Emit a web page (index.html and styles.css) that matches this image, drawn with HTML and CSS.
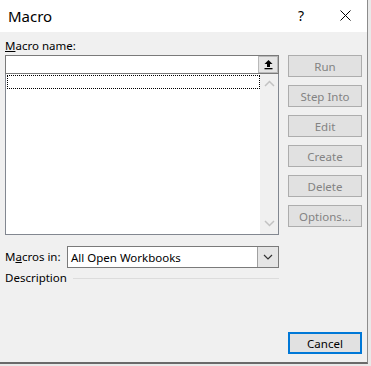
FILE: index.html
```html
<!DOCTYPE html>
<html lang="en">
<head>
<meta charset="UTF-8">
<title>Macro</title>
<link rel="stylesheet" href="styles.css">
</head>
<body>

  <div class="dialog">
    <div class="titlebar">
      <span class="title">Macro</span>
      <span class="help">?</span>
      <span class="close">
        <svg width="11" height="11" viewBox="0 0 11 11"><path d="M0.5 0.5 L10.5 10.5 M10.5 0.5 L0.5 10.5" stroke="#000" stroke-width="1" fill="none"/></svg>
      </span>
    </div>

    <div class="content">
      <div class="left">
        <div class="label"><u>M</u>acro name:</div>
        <div class="name-input">
          <span class="upload-btn">
            <svg width="11" height="11" viewBox="0 0 11 11"><path d="M5.5 1 L1.5 5 H4 V8 H7 V5 H9.5 Z" fill="#000"/><rect x="1.5" y="9" width="8" height="1.3" fill="#000"/></svg>
          </span>
        </div>
        <div class="listbox">
          <div class="list-items">
            <div class="focus-row"></div>
          </div>
          <div class="scrollbar">
            <svg width="11" height="7" viewBox="0 0 11 7"><path d="M1 6 L5.5 1.5 L10 6" stroke="#c2c2c2" stroke-width="1.5" fill="none"/></svg>
            <svg width="11" height="7" viewBox="0 0 11 7"><path d="M1 1 L5.5 5.5 L10 1" stroke="#c2c2c2" stroke-width="1.5" fill="none"/></svg>
          </div>
        </div>

        <div class="macros-in">
          <span class="label">M<u>a</u>cros in:</span>
          <div class="select">
            <span class="select-text">All Open Workbooks</span>
            <span class="drop-btn">
              <svg width="10" height="6" viewBox="0 0 10 6"><path d="M1 1 L5 5 L9 1" stroke="#333" stroke-width="1.2" fill="none"/></svg>
            </span>
          </div>
        </div>

        <div class="description">
          <span>Description</span>
          <span class="rule"></span>
        </div>
      </div>

      <div class="buttons">
        <button class="btn" disabled>Run</button>
        <button class="btn" disabled>Step Into</button>
        <button class="btn" disabled>Edit</button>
        <button class="btn" disabled>Create</button>
        <button class="btn" disabled>Delete</button>
        <button class="btn" disabled>Options...</button>
        <button class="btn cancel">Cancel</button>
      </div>
    </div>
  </div>

</body>
</html>
```

FILE: styles.css
```css
:root {
  --panel: #f0f0f0;
  --btn-bg: #e1e1e1;
  --btn-border: #adadad;
  --field-border: #7a7a7a;
  --disabled: #838383;
  --accent: #0078d7;
}
html, body {
  margin: 0;
  padding: 0;
}
body {
  width: 371px;
  height: 366px;
  overflow: hidden;
  background: #e9e9e9;
  font-family: 'Noto Sans', sans-serif;
  font-size: 11.5px;
  color: #000;
}
.dialog {
  width: 367px;
  height: 362px;
  border-right: 1px solid #8c8c8c;
  border-bottom: 2px solid #6a6a6a;
  background: var(--panel);
  display: flex;
  flex-direction: column;
}
.titlebar {
  height: 32px;
  background: #fff;
  display: flex;
  align-items: center;
  flex-shrink: 0;
}
.title {
  font-size: 15px;
  margin-left: 8px;
  flex: 1;
  padding-bottom: 1px;
}
.help {
  font-size: 14px;
  width: 10px;
  margin-right: 32px;
  padding-bottom: 2px;
}
.close {
  display: flex;
  margin-right: 16px;
  padding-bottom: 1px;
}
.content {
  flex: 1;
  display: flex;
  gap: 9px;
  padding: 6px 0 0 5px;
}
.left {
  width: 274px;
  display: flex;
  flex-direction: column;
}
.label {
  line-height: 16px;
  height: 16px;
  margin-bottom: 1px;
}
.name-input {
  height: 17px;
  border: 1px solid var(--field-border);
  background: #fff;
  display: flex;
  justify-content: flex-end;
}
.upload-btn {
  width: 20px;
  height: 17px;
  box-sizing: border-box;
  background: #e5e5e5;
  border: 1px solid #b9b9b9;
  display: flex;
  align-items: center;
  justify-content: center;
}
.listbox {
  height: 160px;
  border: 1px solid #828790;
  border-top: none;
  background: #fff;
  display: flex;
}
.list-items {
  flex: 1;
  padding: 1px 0 0 1px;
}
.focus-row {
  height: 12px;
  border: 1px dotted #000;
}
.scrollbar {
  width: 18px;
  background: #f0f0f0;
  display: flex;
  flex-direction: column;
  justify-content: space-between;
  align-items: center;
  padding: 6px 0 7px;
  box-sizing: border-box;
}
.macros-in {
  display: flex;
  align-items: center;
  margin-top: 11px;
}
.macros-in .label {
  width: 62px;
  margin: 0;
}
.select {
  flex: 1;
  height: 20px;
  border: 1px solid var(--field-border);
  background: #fff;
  display: flex;
  align-items: center;
}
.select-text {
  flex: 1;
  padding-left: 3px;
}
.drop-btn {
  width: 21px;
  height: 20px;
  box-sizing: border-box;
  border-left: 1px solid #a0a0a0;
  background: #e5e5e5;
  display: flex;
  align-items: center;
  justify-content: center;
}
.description {
  display: flex;
  align-items: center;
  gap: 6px;
  margin-top: 2px;
  line-height: 16px;
}
.rule {
  flex: 1;
  height: 1px;
  background: #dcdcdc;
}
.buttons {
  width: 74px;
  display: flex;
  flex-direction: column;
  gap: 8px;
  padding: 17px 0 8px;
}
.btn {
  height: 22px;
  margin: 0;
  padding: 0;
  font-family: inherit;
  font-size: 11.5px;
  background: var(--btn-bg);
  border: 1px solid var(--btn-border);
  color: #000;
}
.btn:disabled {
  color: var(--disabled);
}
.cancel {
  margin-top: auto;
  border: 2px solid var(--accent);
}
```
